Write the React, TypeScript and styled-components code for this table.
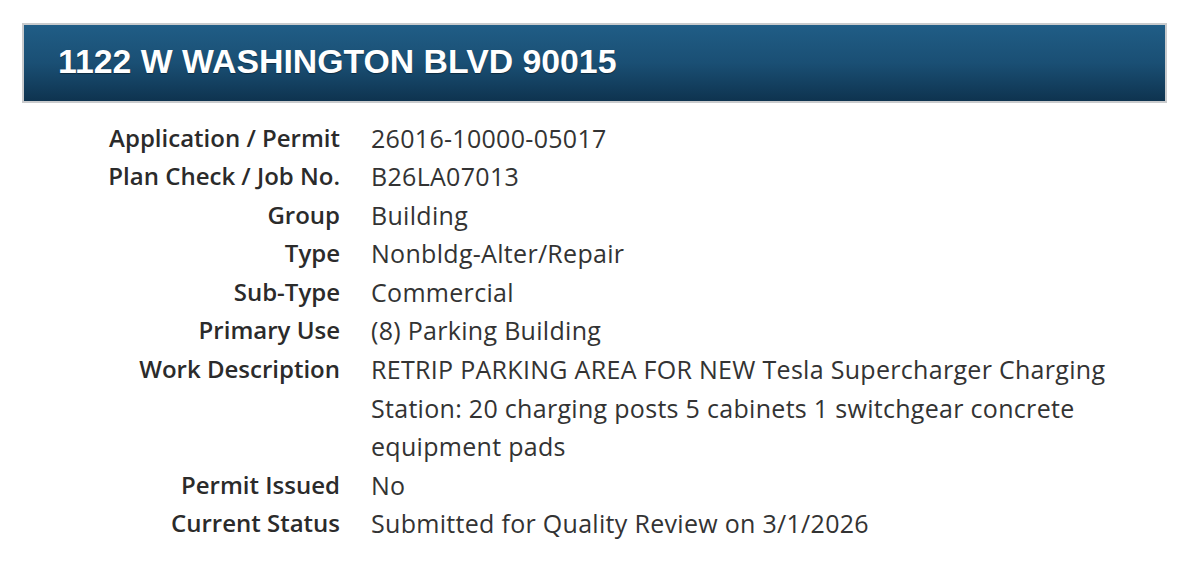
import React from "react";
import styled, { createGlobalStyle } from "styled-components";

const Global = createGlobalStyle`
  html, body { margin: 0; padding: 0; background: #ffffff; }
  body { font-family: "Open Sans", "Liberation Sans", sans-serif; color: #333333; }
`;

const Page = styled.div`
  padding: 23px 24px 0 22px;
  width: 1145px;
`;

const Header = styled.div`
  box-sizing: border-box;
  height: 80px;
  border: 2px solid #c9cbcd;
  background: linear-gradient(to bottom, #205d86 0%, #1a4f74 50%, #0e334f 100%);
  display: flex;
  align-items: center;
  padding-left: 34px;
  padding-bottom: 4px;
`;

const Title = styled.h1`
  margin: 0;
  font-family: "Liberation Sans", Arial, sans-serif;
  font-weight: 700;
  font-size: 33.8px;
  color: #ffffff;
  text-shadow: 0 1px 1px rgba(0, 0, 0, 0.4);
`;

const Details = styled.dl`
  margin: 15.5px 0 0 0;
  display: grid;
  grid-template-columns: 318px 792px;
  column-gap: 31px;
  line-height: 38.6px;
`;

const Label = styled.dt`
  text-align: right;
  font-size: 24px;
  font-weight: 600;
  color: #2b2b2b;
`;

const Value = styled.dd`
  margin: 0;
  font-size: 25px;
  letter-spacing: 0.3px;
  color: #333333;
`;

const rows: [string, string][] = [
  ["Application / Permit", "26016-10000-05017"],
  ["Plan Check / Job No.", "B26LA07013"],
  ["Group", "Building"],
  ["Type", "Nonbldg-Alter/Repair"],
  ["Sub-Type", "Commercial"],
  ["Primary Use", "(8) Parking Building"],
  [
    "Work Description",
    "RETRIP PARKING AREA FOR NEW Tesla Supercharger Charging Station: 20 charging posts 5 cabinets 1 switchgear concrete equipment pads",
  ],
  ["Permit Issued", "No"],
  ["Current Status", "Submitted for Quality Review on 3/1/2026"],
];

export default function App() {
  return (
    <>
      <Global />
      <Page>
        <Header>
          <Title>1122 W WASHINGTON BLVD 90015</Title>
        </Header>
        <Details>
          {rows.map(([k, v]) => (
            <React.Fragment key={k}>
              <Label>{k}</Label>
              <Value>{v}</Value>
            </React.Fragment>
          ))}
        </Details>
      </Page>
    </>
  );
}
